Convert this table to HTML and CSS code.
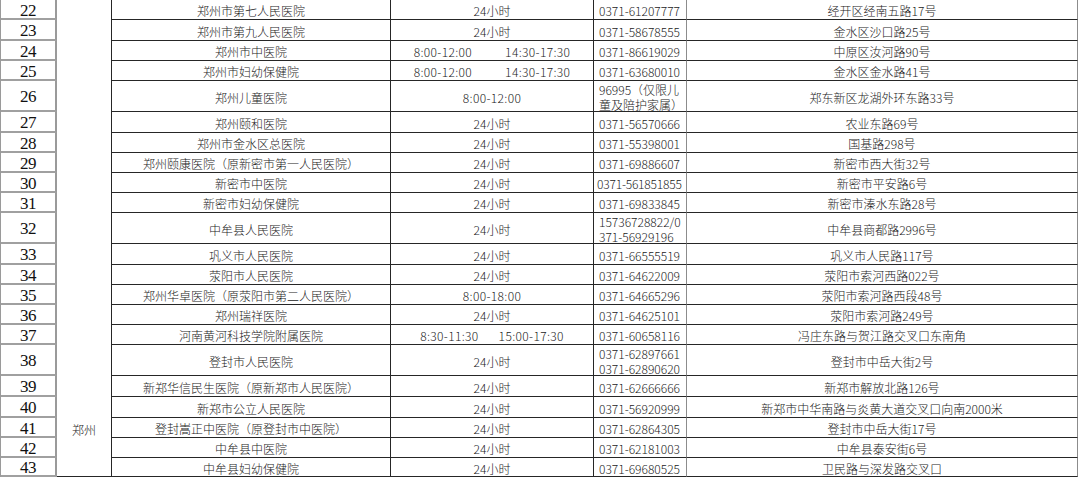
FILE: index.html
```html
<!DOCTYPE html>
<html lang="zh-CN">
<head>
<meta charset="utf-8">
<title>郑州医院列表</title>
<link rel="stylesheet" href="styles.css">
</head>
<body>
<div class="sheet">
  <div class="city">郑州</div>

  <div class="num">22</div><div class="cell">郑州市第七人民医院</div><div class="cell">24小时</div><div class="cell phone">0371-61207777</div><div class="cell addr">经开区经南五路17号</div>
  <div class="num">23</div><div class="cell">郑州市第九人民医院</div><div class="cell">24小时</div><div class="cell phone">0371-58678555</div><div class="cell addr">金水区沙口路25号</div>
  <div class="num">24</div><div class="cell">郑州市中医院</div><div class="cell"><span class="time">8:00-12:00</span><span class="time gap-wide">14:30-17:30</span></div><div class="cell phone">0371-86619029</div><div class="cell addr">中原区汝河路90号</div>
  <div class="num">25</div><div class="cell">郑州市妇幼保健院</div><div class="cell"><span class="time">8:00-12:00</span><span class="time gap-wide">14:30-17:30</span></div><div class="cell phone">0371-63680010</div><div class="cell addr">金水区金水路41号</div>
  <div class="num">26</div><div class="cell">郑州儿童医院</div><div class="cell"><span class="time">8:00-12:00</span></div><div class="cell phone two">96995（仅限儿<br>童及陪护家属）</div><div class="cell addr">郑东新区龙湖外环东路33号</div>
  <div class="num">27</div><div class="cell">郑州颐和医院</div><div class="cell">24小时</div><div class="cell phone">0371-56570666</div><div class="cell addr">农业东路69号</div>
  <div class="num">28</div><div class="cell">郑州市金水区总医院</div><div class="cell">24小时</div><div class="cell phone">0371-55398001</div><div class="cell addr">国基路298号</div>
  <div class="num">29</div><div class="cell">郑州颐康医院（原新密市第一人民医院）</div><div class="cell">24小时</div><div class="cell phone">0371-69886607</div><div class="cell addr">新密市西大街32号</div>
  <div class="num">30</div><div class="cell">新密市中医院</div><div class="cell">24小时</div><div class="cell phone long">0371-561851855</div><div class="cell addr">新密市平安路6号</div>
  <div class="num">31</div><div class="cell">新密市妇幼保健院</div><div class="cell">24小时</div><div class="cell phone">0371-69833845</div><div class="cell addr">新密市溱水东路28号</div>
  <div class="num">32</div><div class="cell">中牟县人民医院</div><div class="cell">24小时</div><div class="cell phone two">15736728822/0<br>371-56929196</div><div class="cell addr">中牟县商都路2996号</div>
  <div class="num">33</div><div class="cell">巩义市人民医院</div><div class="cell">24小时</div><div class="cell phone">0371-66555519</div><div class="cell addr">巩义市人民路117号</div>
  <div class="num">34</div><div class="cell">荥阳市人民医院</div><div class="cell">24小时</div><div class="cell phone">0371-64622009</div><div class="cell addr">荥阳市索河西路022号</div>
  <div class="num">35</div><div class="cell">郑州华卓医院（原荥阳市第二人民医院）</div><div class="cell"><span class="time">8:00-18:00</span></div><div class="cell phone">0371-64665296</div><div class="cell addr">荥阳市索河路西段48号</div>
  <div class="num">36</div><div class="cell">郑州瑞祥医院</div><div class="cell">24小时</div><div class="cell phone">0371-64625101</div><div class="cell addr">荥阳市索河路249号</div>
  <div class="num">37</div><div class="cell">河南黄河科技学院附属医院</div><div class="cell"><span class="time">8:30-11:30</span><span class="time gap">15:00-17:30</span></div><div class="cell phone">0371-60658116</div><div class="cell addr">冯庄东路与贺江路交叉口东南角</div>
  <div class="num">38</div><div class="cell">登封市人民医院</div><div class="cell">24小时</div><div class="cell phone two">0371-62897661<br>0371-62890620</div><div class="cell addr">登封市中岳大街2号</div>
  <div class="num">39</div><div class="cell">新郑华信民生医院（原新郑市人民医院）</div><div class="cell">24小时</div><div class="cell phone">0371-62666666</div><div class="cell addr">新郑市解放北路126号</div>
  <div class="num">40</div><div class="cell">新郑市公立人民医院</div><div class="cell">24小时</div><div class="cell phone">0371-56920999</div><div class="cell addr">新郑市中华南路与炎黄大道交叉口向南2000米</div>
  <div class="num">41</div><div class="cell">登封嵩正中医院（原登封市中医院）</div><div class="cell">24小时</div><div class="cell phone">0371-62864305</div><div class="cell addr">登封市中岳大街17号</div>
  <div class="num">42</div><div class="cell">中牟县中医院</div><div class="cell">24小时</div><div class="cell phone">0371-62181003</div><div class="cell addr">中牟县泰安街6号</div>
  <div class="num">43</div><div class="cell">中牟县妇幼保健院</div><div class="cell">24小时</div><div class="cell phone">0371-69680525</div><div class="cell addr">卫民路与深发路交叉口</div>
</div>
</body>
</html>
```

FILE: styles.css
```css
* { box-sizing: border-box; }

html, body {
  margin: 0;
  padding: 0;
  background: #ffffff;
}

body {
  width: 1080px;
  height: 477px;
  overflow: hidden;
  font-family: "Noto Sans CJK SC", sans-serif;
  font-size: 12px;
  font-weight: 300;
  color: #1a1a1a;
}

.sheet {
  display: grid;
  width: 1078px;
  border-left: 1px solid #9a9a9a;
  grid-template-columns: 56px 55px 279px 203px 93px 391px;
  grid-template-rows: 20px 21px 20px 20px 31px 21px 20px 20px 20px 20px 31px 21px 20px 20px 20px 20px 31px 21px 21px 20px 20px 19px;
}

.city {
  grid-column: 2;
  grid-row: 1 / -1;
  display: flex;
  align-items: flex-end;
  justify-content: center;
  padding-bottom: 38px;
  line-height: 16px;
  border-right: 1px solid #262626;
  border-bottom: 1px solid #262626;
}

.num {
  display: flex;
  align-items: center;
  justify-content: center;
  padding-top: 3px;
  font-family: "Liberation Serif", serif;
  font-weight: 400;
  font-size: 17px;
  letter-spacing: -0.6px;
  line-height: 16px;
  color: #111;
  border-right: 2px solid #9a9a9a;
  border-bottom: 2px solid #a0a0a0;
}

.cell {
  display: flex;
  align-items: center;
  justify-content: center;
  padding-top: 2px;
  line-height: 15px;
  white-space: nowrap;
  border-right: 1px solid #262626;
  border-bottom: 1px solid #262626;
}

.time { letter-spacing: 0.35px; }
.gap-wide { margin-left: 33px; }
.gap { margin-left: 20px; }

.phone {
  justify-content: flex-start;
  padding-left: 5px;
  border-right-color: #8c8c8c;
}

.phone.long {
  padding-left: 3px;
  letter-spacing: -0.2px;
}

.phone.two {
  padding-top: 1px;
  line-height: 15px;
}

.addr {
  border-right: 1px solid #8c8c8c;
}
```
